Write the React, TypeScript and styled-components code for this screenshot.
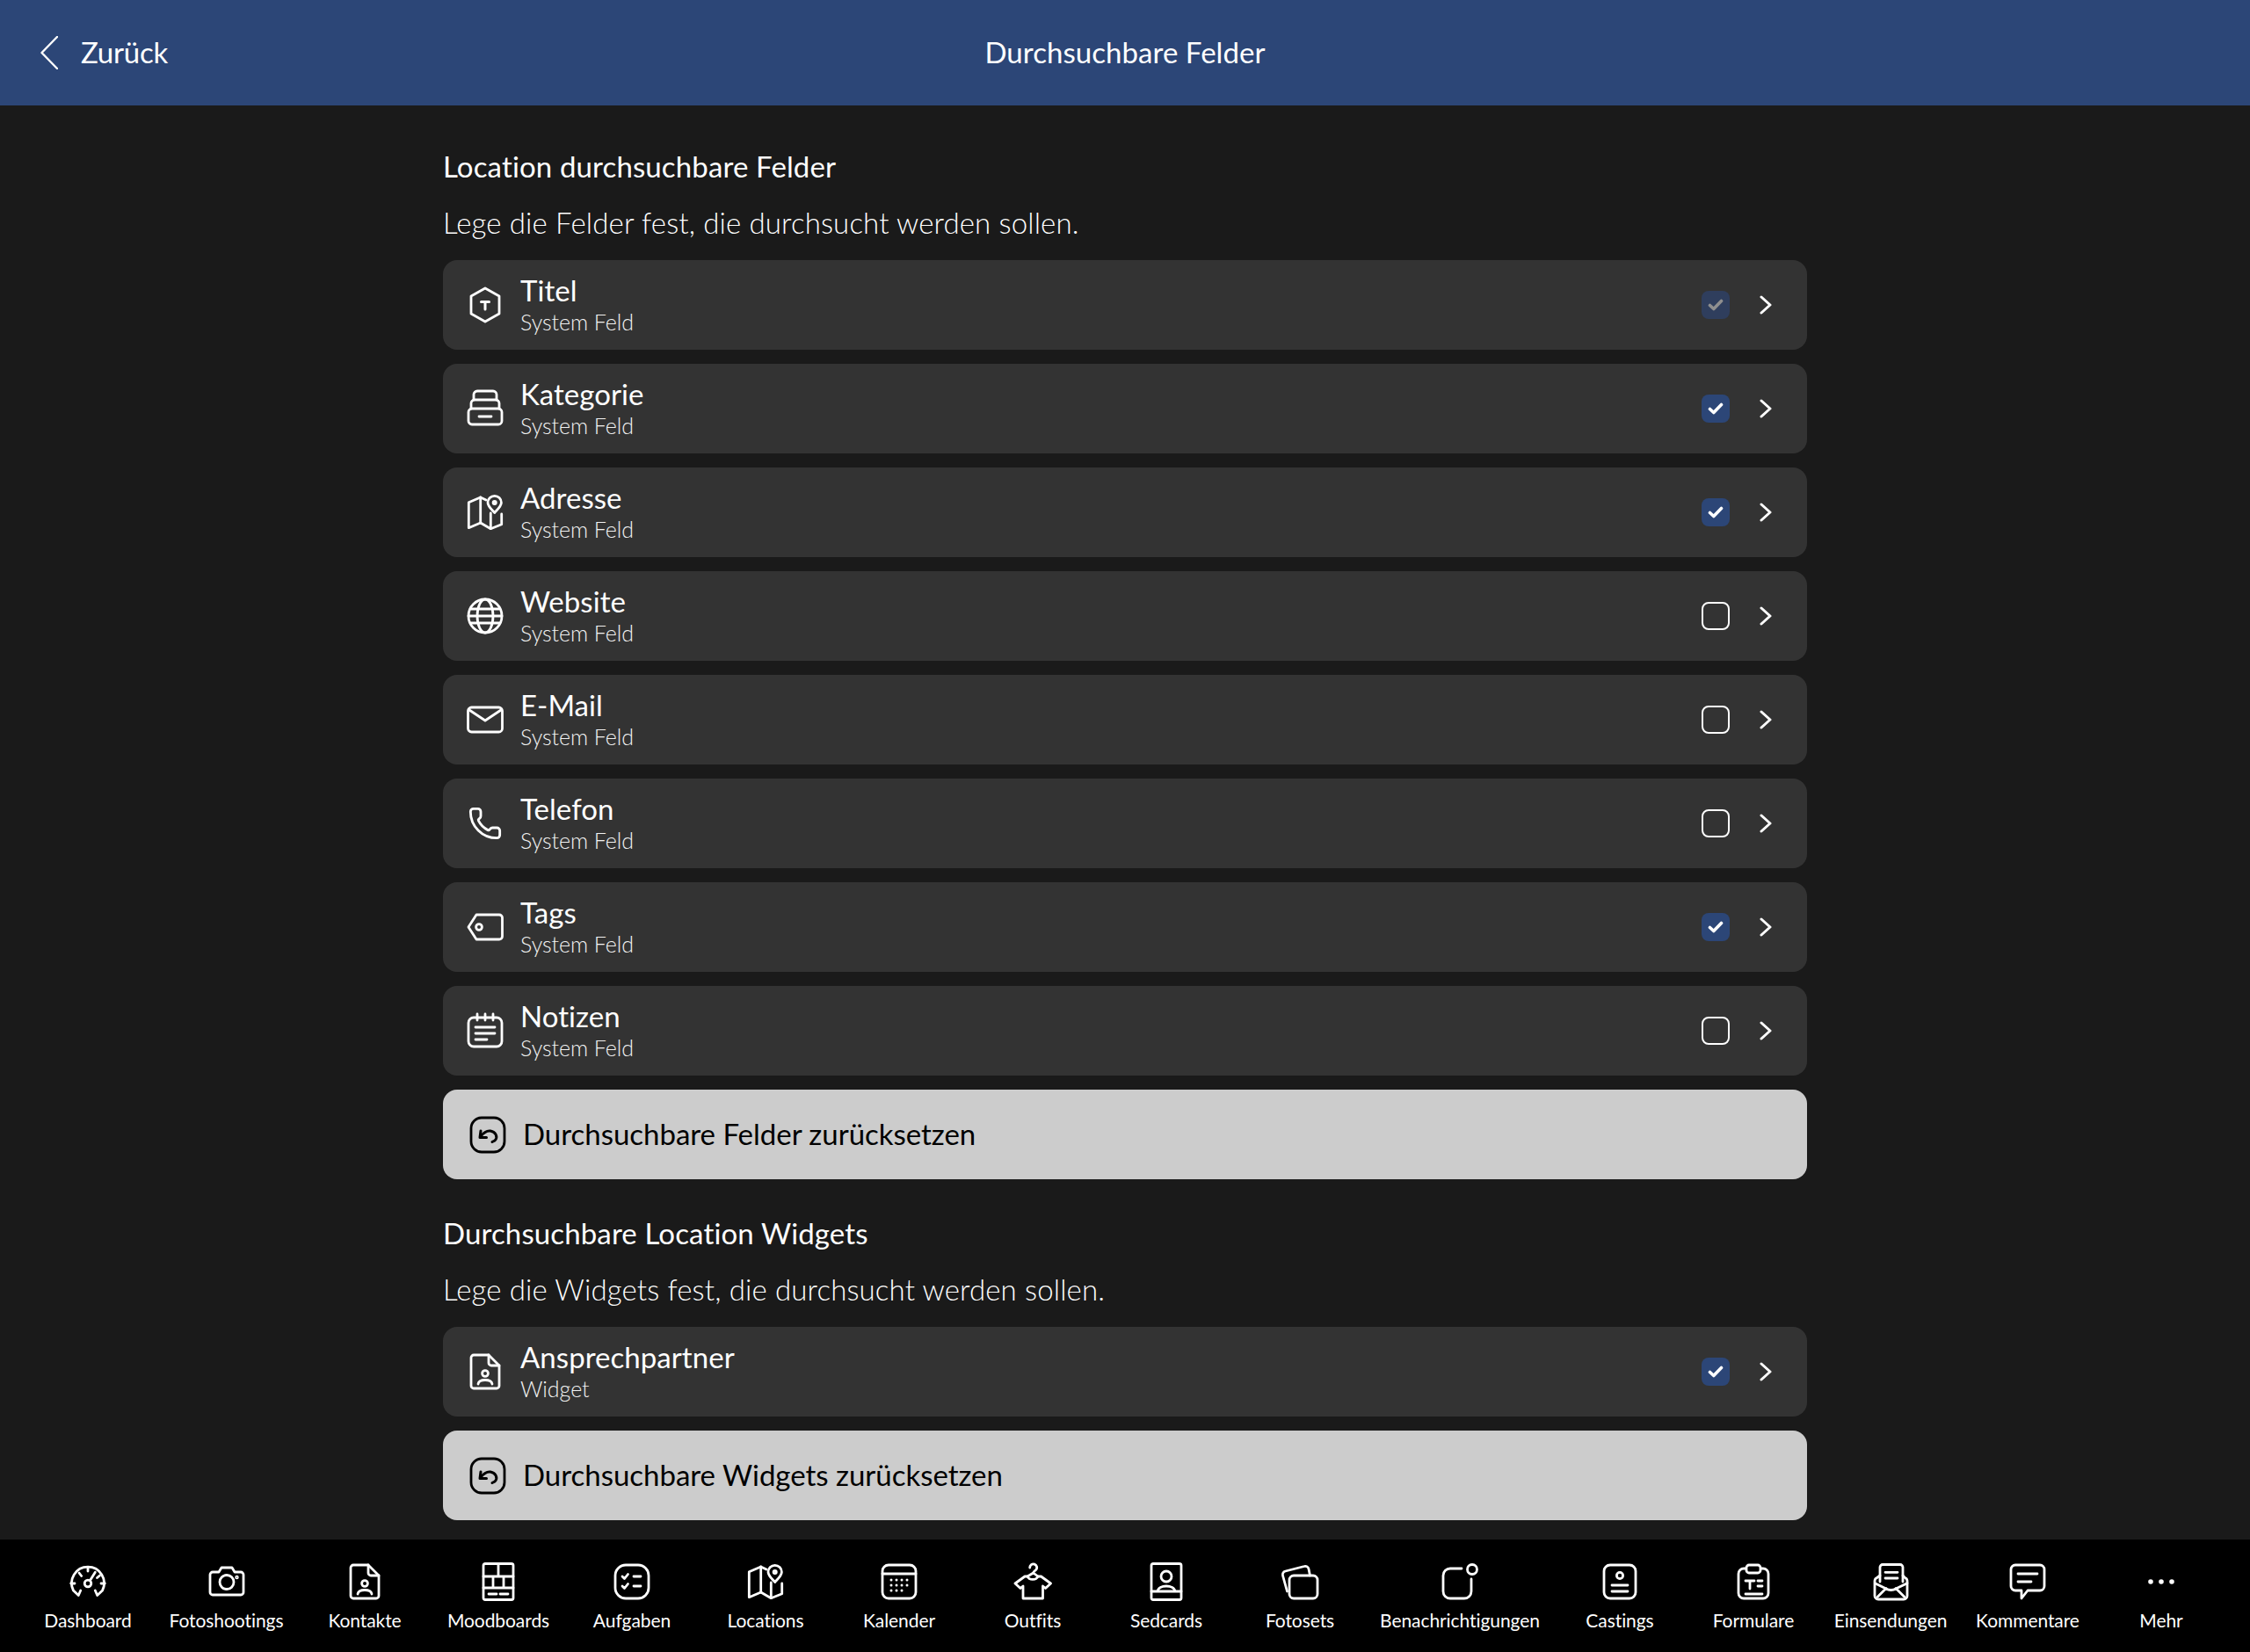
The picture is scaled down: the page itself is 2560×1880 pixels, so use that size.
import { ReactNode } from "react";
import styled, { createGlobalStyle } from "styled-components";
import { Phone } from "lucide-react";

const GlobalStyle = createGlobalStyle`
  html, body {
    margin: 0;
    padding: 0;
    background: #1a1a1a;
  }
  body {
    font-family: Lato, "Open Sans", sans-serif;
    color: #fff;
  }
`;

const Page = styled.div`
  width: 100%;
  height: 100vh;
  display: flex;
  flex-direction: column;
  overflow: hidden;
  background: #1a1a1a;
`;

const Header = styled.header`
  height: 120px;
  flex: none;
  background: #2c4677;
  display: grid;
  grid-template-columns: 1fr auto 1fr;
  align-items: center;
  padding: 0 46px 3px;
  box-sizing: border-box;
`;

const BackLink = styled.a`
  display: flex;
  align-items: center;
  gap: 26px;
  font-size: 33px;
  letter-spacing: -0.25px;
`;

const HeaderTitle = styled.div`
  font-size: 33px;
  letter-spacing: 0.05px;
`;

const Main = styled.main`
  flex: 1;
  min-height: 0;
  overflow: hidden;
  padding: 46px 504px 0;
`;

const Section = styled.section`
  display: flex;
  flex-direction: column;
  & + & {
    margin-top: 38px;
  }
`;

const Heading = styled.h2`
  margin: 0;
  font-size: 33px;
  line-height: 46px;
  font-weight: 400;
  letter-spacing: 0.13px;
`;

const Hint = styled.p`
  margin: 18px 0 20px;
  font-size: 33px;
  line-height: 46px;
  font-weight: 300;
  letter-spacing: 0.14px;
`;

const List = styled.div`
  display: flex;
  flex-direction: column;
  gap: 16px;
`;

const Row = styled.div`
  height: 102px;
  background: #333333;
  border-radius: 16px;
  display: flex;
  align-items: center;
  padding: 0 40px 0 28px;
`;

const RowIcon = styled.span`
  width: 40px;
  height: 40px;
  flex: none;
  display: flex;
  align-items: center;
  justify-content: center;
  margin-right: 20px;
`;

const RowText = styled.div`
  flex: 1;
  display: flex;
  flex-direction: column;
  margin-top: -2px;
`;

const RowTitle = styled.div`
  font-size: 33px;
  line-height: 38px;
  letter-spacing: 0.05px;
`;

const RowSub = styled.div`
  font-size: 25px;
  line-height: 32px;
  padding-top: 1px;
  font-weight: 300;
  letter-spacing: -0.05px;
  color: #f2f2f2;
`;

const CheckBox = styled.span<{ $on: boolean; $locked?: boolean }>`
  width: 32px;
  height: 32px;
  box-sizing: border-box;
  border-radius: 8px;
  display: flex;
  align-items: center;
  justify-content: center;
  margin-right: 34px;
  background: ${(p) => (p.$locked ? "#2f3e5d" : p.$on ? "#2c4677" : "transparent")};
  border: ${(p) => (p.$on ? "none" : "2.5px solid #fff")};
  color: ${(p) => (p.$locked ? "#8f8f8f" : "#fff")};
`;

const ResetButton = styled.button`
  height: 102px;
  width: 100%;
  border: none;
  border-radius: 16px;
  background: #cccccc;
  color: #000;
  display: flex;
  align-items: center;
  gap: 18px;
  padding: 0 29px 3px;
  font-family: inherit;
  font-size: 33px;
  letter-spacing: -0.02px;
`;

const ResetIcon = styled.span`
  display: flex;
  margin-top: 3px;
`;

const TabBar = styled.nav`
  height: 128px;
  flex: none;
  background: #000;
  display: flex;
  padding: 26px 24px 0;
  box-sizing: border-box;
`;

const TabItem = styled.div<{ $width: number }>`
  width: ${(p) => p.$width}px;
  flex: none;
  display: flex;
  flex-direction: column;
  align-items: center;
`;

const TabLabel = styled.span`
  font-size: 21px;
  line-height: 28px;
  margin-top: 8px;
  letter-spacing: -0.07px;
  white-space: nowrap;
`;

const LineIcon = styled.svg`
  display: block;
  fill: none;
  stroke: currentColor;
  stroke-width: 2.8;
  stroke-linecap: round;
  stroke-linejoin: round;
  flex: none;
`;

function Glyph({ size = 44, children }: { size?: number; children: ReactNode }) {
  return (
    <LineIcon width={size} height={size} viewBox="0 0 44 44">
      {children}
    </LineIcon>
  );
}

function Chevron() {
  return (
    <LineIcon width="14" height="22" viewBox="0 0 14 22" style={{ strokeWidth: 3 }}>
      <path d="M2 2 L12 11 L2 20" />
    </LineIcon>
  );
}

function Tick() {
  return (
    <LineIcon width="18" height="16" viewBox="0 0 18 16" style={{ strokeWidth: 3.6 }}>
      <path d="M2.5 8.5 L6.8 12.5 L15.5 3.5" />
    </LineIcon>
  );
}

const mapShape = (
  <>
    <path d="M23 8 L16.7 5 L3.3 10.7 V39.7 L16.7 34 L28.3 40.7 L40.7 35.7 V24" />
    <path d="M16.7 5 V34 M28.3 23 V40.7" />
    <path d="M32.7 22.5 C28 17.5 25 15 25 11 a7.7 7.7 0 0 1 15.4 0 c0 4 -3 6.5 -7.7 11.5 Z" />
    <circle cx="32.7" cy="11" r="1.6" />
  </>
);

const docShape = (
  <>
    <path d="M9 3 H26 L38 15 V38 a3 3 0 0 1 -3 3 H9 a3 3 0 0 1 -3 -3 V6 a3 3 0 0 1 3 -3 Z" />
    <path d="M26 3 V12 a3 3 0 0 0 3 3 H38" />
    <circle cx="22" cy="24" r="3.4" />
    <path d="M14 36 C15 30 29 30 30 36" />
  </>
);

const resetGlyph = (
  <Glyph>
    <rect x="3" y="3" width="38" height="39" rx="12" />
    <path d="M14 18 L13 25.5 H20.5" strokeWidth="3" />
    <path d="M14 24 C18 19 22 17.5 25 18 C31 19 34 25 30 29 L27 30.5" strokeWidth="3" />
  </Glyph>
);

const rowIcons: Record<string, ReactNode> = {
  title: (
    <Glyph>
      <path d="M22 3 L38 12 V32 L22 41 L6 32 V12 Z" />
      <path d="M17.5 18.5 H26.5 M22 18.5 V27" strokeWidth="3" />
    </Glyph>
  ),
  category: (
    <Glyph>
      <rect x="3" y="22" width="38" height="18" rx="4" />
      <path d="M6 22 V16 a4 4 0 0 1 4 -4 H34 a4 4 0 0 1 4 4 V22" />
      <path d="M9 12 V6 a4 4 0 0 1 4 -4 H31 a4 4 0 0 1 4 4 V12" />
      <path d="M15 31 H29" />
    </Glyph>
  ),
  map: <Glyph>{mapShape}</Glyph>,
  globe: (
    <Glyph>
      <circle cx="22" cy="22" r="19" />
      <ellipse cx="22" cy="22" rx="9" ry="19" />
      <path d="M3 22 H41 M6 14 H38 M6 30 H38" />
    </Glyph>
  ),
  mail: (
    <Glyph>
      <rect x="2.5" y="8" width="39" height="28" rx="4" />
      <path d="M4 11 L22 23 L40 11" />
    </Glyph>
  ),
  phone: <Phone size={40} strokeWidth={1.7} />,
  tag: (
    <Glyph>
      <path d="M12 8 H38 a3.5 3.5 0 0 1 3.5 3.5 V32.5 a3.5 3.5 0 0 1 -3.5 3.5 H12 L3 22 Z" />
      <circle cx="15" cy="22" r="3.4" />
    </Glyph>
  ),
  notes: (
    <Glyph>
      <rect x="3" y="7" width="38" height="33" rx="6" />
      <path d="M13 3 V10 M22 3 V10 M31 3 V10 M11 18 H33 M11 25 H33 M11 32 H24" />
    </Glyph>
  ),
  doc: <Glyph>{docShape}</Glyph>,
};

const tabIcons: Record<string, ReactNode> = {
  dashboard: (
    <>
      <path d="M13.7 32 L11.3 37.5 L5.5 32 A18.5 18.5 0 1 1 38.5 32 L32.7 37.5 L30.3 32" />
      <path d="M22 6 V10 M12 12 L14.7 15.5 M2.7 24 H7 M41.3 24 H37 M35.5 15 L32.5 17.5" />
      <circle cx="22" cy="24" r="3.8" />
      <path d="M24.5 20.5 L30.3 11.3" />
    </>
  ),
  camera: (
    <>
      <path d="M6 11 H13 L16 6 H28 L31 11 H38 a3 3 0 0 1 3 3 V34 a3 3 0 0 1 -3 3 H6 a3 3 0 0 1 -3 -3 V14 a3 3 0 0 1 3 -3 Z" />
      <circle cx="22" cy="22.5" r="8" />
      <circle cx="33.5" cy="17" r="0.8" />
    </>
  ),
  contact: docShape,
  moodboard: (
    <>
      <rect x="5" y="1.5" width="34" height="41" rx="2" />
      <path d="M5 16 H39 M22 1.5 V16 M5 29 H39 M16 16 V29 M28 16 V29 M11 36 H20 M24 36 H33" />
    </>
  ),
  tasks: (
    <>
      <rect x="3" y="3" width="38" height="38" rx="12" />
      <path d="M11 16 L13.5 18.5 L17.5 13.5 M24 16 H32 M11 27 L13.5 29.5 L17.5 24.5 M24 27 H32" />
    </>
  ),
  map: mapShape,
  calendar: (
    <>
      <rect x="3" y="3" width="38" height="38" rx="7" />
      <path d="M3 13 H41" />
      <path strokeWidth="3" d="M13 20 h.01 M19 20 h.01 M25 20 h.01 M31 20 h.01 M13 26 h.01 M19 26 h.01 M25 26 h.01 M31 26 h.01 M13 32 h.01 M19 32 h.01 M25 32 h.01" />
    </>
  ),
  outfit: (
    <>
      <path d="M18.7 6 a4 4 0 1 1 7 2.5 c-2 1.5 -3 2 -3 3.5" />
      <path d="M16 16 L22.7 12 L28 16" />
      <path d="M13 16 L2 24 L8 29.5 L11 27 V41 H33.5 V27 L36.5 29.5 L42.5 24 L31.5 16 H28 C26 20.5 18 20.5 16 16 Z" />
    </>
  ),
  sedcard: (
    <>
      <rect x="5" y="1.5" width="34" height="41" rx="2" />
      <circle cx="22" cy="16" r="6" />
      <path d="M12 33 C13 25 31 25 32 33 M5 33 H39" />
    </>
  ),
  photoset: (
    <>
      <rect x="10" y="15" width="32" height="26" rx="5" />
      <path d="M7.5 33 L2.5 15 a4 4 0 0 1 3 -5 L27 4.5 a4 4 0 0 1 5 3 L33.5 15" />
    </>
  ),
  bell: (
    <>
      <circle cx="36" cy="8" r="5.5" />
      <path d="M24 7 H11 a8 8 0 0 0 -8 8 V33 a8 8 0 0 0 8 8 H27 a8 8 0 0 0 8 -8 V19" />
    </>
  ),
  casting: (
    <>
      <rect x="4" y="3" width="36" height="38" rx="7" />
      <circle cx="22" cy="15" r="3.6" />
      <path d="M13 26 H31 M13 33 H31" />
    </>
  ),
  form: (
    <>
      <rect x="5" y="7" width="34" height="34" rx="6" />
      <rect x="14" y="3" width="16" height="9" rx="3" fill="#000" />
      <path d="M13 21 H23 M18 21 V30 M27 21 H32 M27 27 H32 M13 36 H32" />
    </>
  ),
  submission: (
    <>
      <path d="M10 22 V5.5 a3 3 0 0 1 3 -3 H33 a3 3 0 0 1 3 3 V22" />
      <path d="M16 11.3 H30 M16 18 H30" />
      <path d="M10 15 L6.5 17.5 a4 4 0 0 0 -2.5 3.5 V38 a4 4 0 0 0 4 4 H37 a4 4 0 0 0 4 -4 V21 a4 4 0 0 0 -2.5 -3.5 L36 15" />
      <path d="M4.3 23.7 L17 30 C20 32 25 32 28 30 L41 23.7 M7 39.5 L17 29.5 M38 39.5 L28 29.5" />
    </>
  ),
  comment: (
    <>
      <path d="M8 3 H36 a5 5 0 0 1 5 5 V27 a5 5 0 0 1 -5 5 H22 L15 41 V32 H8 a5 5 0 0 1 -5 -5 V8 a5 5 0 0 1 5 -5 Z" />
      <path d="M11 13 H33 M11 22 H26" />
    </>
  ),
  more: (
    <>
      <circle cx="10" cy="22" r="1.4" fill="currentColor" />
      <circle cx="22" cy="22" r="1.4" fill="currentColor" />
      <circle cx="34" cy="22" r="1.4" fill="currentColor" />
    </>
  ),
};

const fields = [
  { title: "Titel", icon: "title", on: true, locked: true },
  { title: "Kategorie", icon: "category", on: true },
  { title: "Adresse", icon: "map", on: true },
  { title: "Website", icon: "globe", on: false },
  { title: "E-Mail", icon: "mail", on: false },
  { title: "Telefon", icon: "phone", on: false },
  { title: "Tags", icon: "tag", on: true },
  { title: "Notizen", icon: "notes", on: false },
];

const tabs = [
  { label: "Dashboard", icon: "dashboard", width: 152 },
  { label: "Fotoshootings", icon: "camera", width: 163 },
  { label: "Kontakte", icon: "contact", width: 152 },
  { label: "Moodboards", icon: "moodboard", width: 152 },
  { label: "Aufgaben", icon: "tasks", width: 152 },
  { label: "Locations", icon: "map", width: 152 },
  { label: "Kalender", icon: "calendar", width: 152 },
  { label: "Outfits", icon: "outfit", width: 152 },
  { label: "Sedcards", icon: "sedcard", width: 152 },
  { label: "Fotosets", icon: "photoset", width: 152 },
  { label: "Benachrichtigungen", icon: "bell", width: 212 },
  { label: "Castings", icon: "casting", width: 152 },
  { label: "Formulare", icon: "form", width: 152 },
  { label: "Einsendungen", icon: "submission", width: 160 },
  { label: "Kommentare", icon: "comment", width: 152 },
  { label: "Mehr", icon: "more", width: 152 },
];

function FieldRow(props: { title: string; sub: string; icon: string; on: boolean; locked?: boolean }) {
  return (
    <Row>
      <RowIcon>{rowIcons[props.icon]}</RowIcon>
      <RowText>
        <RowTitle>{props.title}</RowTitle>
        <RowSub>{props.sub}</RowSub>
      </RowText>
      <CheckBox $on={props.on} $locked={props.locked}>
        {props.on && <Tick />}
      </CheckBox>
      <Chevron />
    </Row>
  );
}

export default function App() {
  return (
    <Page>
      <GlobalStyle />
      <Header>
        <BackLink>
          <LineIcon width="20" height="38" viewBox="0 0 20 38" style={{ strokeWidth: 2.4, marginTop: 3 }}>
            <path d="M19 1 L1.5 19 L19 37" />
          </LineIcon>
          Zurück
        </BackLink>
        <HeaderTitle>Durchsuchbare Felder</HeaderTitle>
        <span />
      </Header>
      <Main>
        <Section>
          <Heading>Location durchsuchbare Felder</Heading>
          <Hint>Lege die Felder fest, die durchsucht werden sollen.</Hint>
          <List>
            {fields.map((f) => (
              <FieldRow key={f.title} sub="System Feld" {...f} />
            ))}
            <ResetButton>
              <ResetIcon>{resetGlyph}</ResetIcon>
              Durchsuchbare Felder zurücksetzen
            </ResetButton>
          </List>
        </Section>
        <Section>
          <Heading>Durchsuchbare Location Widgets</Heading>
          <Hint>Lege die Widgets fest, die durchsucht werden sollen.</Hint>
          <List>
            <FieldRow title="Ansprechpartner" sub="Widget" icon="doc" on />
            <ResetButton>
              <ResetIcon>{resetGlyph}</ResetIcon>
              Durchsuchbare Widgets zurücksetzen
            </ResetButton>
          </List>
        </Section>
      </Main>
      <TabBar>
        {tabs.map((t) => (
          <TabItem key={t.label} $width={t.width}>
            <Glyph>{tabIcons[t.icon]}</Glyph>
            <TabLabel>{t.label}</TabLabel>
          </TabItem>
        ))}
      </TabBar>
    </Page>
  );
}
